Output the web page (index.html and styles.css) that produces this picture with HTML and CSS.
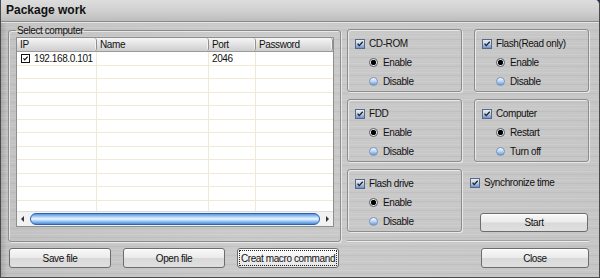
FILE: index.html
```html
<!DOCTYPE html>
<html lang="en">
<head>
    <meta charset="UTF-8">
    <meta name="viewport" content="width=device-width, initial-scale=1.0">
    <title>Package work</title>
    <link rel="stylesheet" href="styles.css">
</head>
<body>

<div class="window">
    <div class="titlebar">Package work</div>

    <div class="content">
        <div class="main">
            <!-- Computer list -->
            <fieldset class="group computers">
                <legend>Select computer</legend>
                <div class="list">
                    <div class="list-head">
                        <div class="hcol">IP</div>
                        <div class="hcol">Name</div>
                        <div class="hcol">Port</div>
                        <div class="hcol">Password</div>
                    </div>
                    <div class="list-body">
                        <div class="row">
                            <div class="cell"><span class="tick"><svg viewBox="0 0 9 9"><path d="M1.8 4.2l1.8 2L7.2 2" fill="none" stroke="#111" stroke-width="1.5"/></svg></span>192.168.0.101</div>
                            <div class="cell"></div>
                            <div class="cell">2046</div>
                            <div class="cell"></div>
                        </div>
                        <div class="row"><div class="cell"></div><div class="cell"></div><div class="cell"></div><div class="cell"></div></div>
                        <div class="row"><div class="cell"></div><div class="cell"></div><div class="cell"></div><div class="cell"></div></div>
                        <div class="row"><div class="cell"></div><div class="cell"></div><div class="cell"></div><div class="cell"></div></div>
                        <div class="row"><div class="cell"></div><div class="cell"></div><div class="cell"></div><div class="cell"></div></div>
                        <div class="row"><div class="cell"></div><div class="cell"></div><div class="cell"></div><div class="cell"></div></div>
                        <div class="row"><div class="cell"></div><div class="cell"></div><div class="cell"></div><div class="cell"></div></div>
                        <div class="row"><div class="cell"></div><div class="cell"></div><div class="cell"></div><div class="cell"></div></div>
                        <div class="row"><div class="cell"></div><div class="cell"></div><div class="cell"></div><div class="cell"></div></div>
                        <div class="row"><div class="cell"></div><div class="cell"></div><div class="cell"></div><div class="cell"></div></div>
                        <div class="row"><div class="cell"></div><div class="cell"></div><div class="cell"></div><div class="cell"></div></div>
                        <div class="row"><div class="cell"></div><div class="cell"></div><div class="cell"></div><div class="cell"></div></div>
                    </div>
                    <div class="hscroll">
                        <span class="arrow arrow-left"></span>
                        <div class="thumb"></div>
                        <span class="arrow arrow-right"></span>
                    </div>
                </div>
            </fieldset>

            <!-- Device options -->
            <div class="options">
                <div class="opt-grid">
                    <div class="group box">
                        <div class="check"><span class="cb"><svg viewBox="0 0 10 10"><path d="M2 4.6l2 2.4L8.4 2.2" fill="none" stroke="#1d1d1d" stroke-width="1.6"/></svg></span>CD-ROM</div>
                        <div class="radio"><span class="rb on"></span>Enable</div>
                        <div class="radio"><span class="rb"></span>Disable</div>
                    </div>
                    <div class="group box">
                        <div class="check"><span class="cb"><svg viewBox="0 0 10 10"><path d="M2 4.6l2 2.4L8.4 2.2" fill="none" stroke="#1d1d1d" stroke-width="1.6"/></svg></span>Flash(Read only)</div>
                        <div class="radio"><span class="rb on"></span>Enable</div>
                        <div class="radio"><span class="rb"></span>Disable</div>
                    </div>
                    <div class="group box">
                        <div class="check"><span class="cb"><svg viewBox="0 0 10 10"><path d="M2 4.6l2 2.4L8.4 2.2" fill="none" stroke="#1d1d1d" stroke-width="1.6"/></svg></span>FDD</div>
                        <div class="radio"><span class="rb on"></span>Enable</div>
                        <div class="radio"><span class="rb"></span>Disable</div>
                    </div>
                    <div class="group box">
                        <div class="check"><span class="cb"><svg viewBox="0 0 10 10"><path d="M2 4.6l2 2.4L8.4 2.2" fill="none" stroke="#1d1d1d" stroke-width="1.6"/></svg></span>Computer</div>
                        <div class="radio"><span class="rb on"></span>Restart</div>
                        <div class="radio"><span class="rb"></span>Turn off</div>
                    </div>
                    <div class="group box">
                        <div class="check"><span class="cb"><svg viewBox="0 0 10 10"><path d="M2 4.6l2 2.4L8.4 2.2" fill="none" stroke="#1d1d1d" stroke-width="1.6"/></svg></span>Flash drive</div>
                        <div class="radio"><span class="rb on"></span>Enable</div>
                        <div class="radio"><span class="rb"></span>Disable</div>
                    </div>
                    <div class="sync-cell">
                        <div class="check sync"><span class="cb"><svg viewBox="0 0 10 10"><path d="M2 4.6l2 2.4L8.4 2.2" fill="none" stroke="#1d1d1d" stroke-width="1.6"/></svg></span>Synchronize time</div>
                        <button class="btn btn-start">Start</button>
                    </div>
                </div>
                <div class="sep"></div>
            </div>
        </div>

        <div class="actions">
            <div class="actions-left">
                <button class="btn">Save file</button>
                <button class="btn">Open file</button>
                <button class="btn focused">Creat macro command</button>
            </div>
            <div class="actions-right">
                <button class="btn btn-close">Close</button>
            </div>
        </div>
    </div>
</div>

</body>
</html>
```

FILE: styles.css
```css
/* Page */
body {
    margin: 0;
    background-color: #22354f;
    font-family: "Liberation Sans Narrow", "Liberation Sans", Arial, sans-serif;
    font-size: 10px;
    letter-spacing: -0.4px;
    color: #111;
}

/* Window with brushed metal look */
.window {
    width: 598px;
    height: 277px;
    border: 1px solid #4a4a4a;
    border-top: none;
    border-top-right-radius: 5px;
    overflow: hidden;
    display: flex;
    flex-direction: column;
    background-color: #c8c8c8;
    background-image:
        repeating-linear-gradient(180deg, rgba(255, 255, 255, 0.10) 0 1px, transparent 1px 3px, rgba(0, 0, 0, 0.04) 3px 4px, transparent 4px 6px, rgba(255, 255, 255, 0.06) 6px 7px, transparent 7px 9px),
        linear-gradient(90deg, #a9a9a9 0, #c2c2c2 6px, #cacaca 40%, #c6c6c6 100%);
}

.titlebar {
    height: 21px;
    line-height: 21px;
    padding-left: 5px;
    font-family: "Liberation Sans", Arial, sans-serif;
    font-weight: bold;
    font-size: 12px;
    letter-spacing: 0;
    color: #111;
    background: linear-gradient(#dddddd, #cfcfcf 55%, #bdbdbd);
    border-bottom: 1px solid #8a8a8a;
    box-shadow: 0 1px 0 #e4e4e4;
}

.content {
    padding: 2px 10px 0 7px;
}

.main {
    display: flex;
    gap: 6px;
}

/* Etched group frames */
.group {
    border: 1px solid #8c8c8c;
    border-radius: 3px;
    box-shadow: inset 1px 1px 0 #e8e8e8, 1px 1px 0 #e8e8e8;
}

.computers {
    margin: 0;
    width: 318px;
    padding: 0 6px 13px 7px;
}

.computers legend {
    padding: 0 1px;
    line-height: 13px;
    font-size: 10px;
}

/* List view */
.list {
    height: 188px;
    border: 1px solid #8e8e8e;
    background-color: #fff;
    display: flex;
    flex-direction: column;
}

.list-head,
.row {
    display: grid;
    grid-template-columns: 80px 112px 47px 77px;
}

.list-head {
    height: 13px;
    line-height: 13px;
    background: linear-gradient(#f6f6f6, #e2e2e2 50%, #cdcdcd);
    border-bottom: 1px solid #9a9a9a;
}

.hcol {
    padding-left: 3px;
    border-right: 1px solid #8f8f8f;
    border-radius: 0 3px 3px 0;
    box-shadow: inset -1px 0 0 #f4f4f4;
}

.list-body {
    flex: 1;
    overflow: hidden;
}

.row {
    height: 13.5px;
}

.cell {
    border-right: 1px solid #efe9d6;
    border-bottom: 1px solid #efe9d6;
    display: flex;
    align-items: center;
    padding-left: 3px;
    white-space: nowrap;
}

.cell:first-child {
    padding-left: 4px;
}

.cell:last-child {
    border-right: none;
}

.tick {
    width: 7px;
    height: 7px;
    border: 1px solid #111;
    background-color: #fff;
    margin-right: 4px;
    display: inline-flex;
}

.tick svg {
    width: 7px;
    height: 7px;
}

/* Horizontal scroll bar */
.hscroll {
    height: 14px;
    display: flex;
    align-items: center;
    gap: 2px;
    background-color: #f2f2f2;
    border-top: 1px solid #dcdcdc;
}

.arrow {
    width: 11px;
    height: 12px;
    display: flex;
    align-items: center;
    justify-content: center;
}

.arrow::before {
    content: "";
    border-top: 3px solid transparent;
    border-bottom: 3px solid transparent;
}

.arrow-left::before {
    border-right: 3px solid #333;
}

.arrow-right::before {
    border-left: 3px solid #333;
}

.thumb {
    flex: 1;
    height: 10px;
    border: 1px solid #2d62b0;
    border-radius: 6px;
    background: linear-gradient(#5d95da, #bfe0ff 35%, #eef7ff 50%, #a3cdf5 70%, #4f8ad6);
}

/* Right side options */
.options {
    width: 242px;
    padding-top: 5px;
}

.opt-grid {
    display: grid;
    grid-template-columns: 115px 115px;
    grid-template-rows: 63px 63px 63px;
    column-gap: 12px;
    row-gap: 7px;
}

.box {
    box-sizing: border-box;
    padding: 4px 0 0 7px;
}

.check,
.radio {
    height: 19px;
    display: flex;
    align-items: center;
    white-space: nowrap;
}

.radio {
    padding-left: 14px;
}

.cb {
    width: 8px;
    height: 8px;
    margin-right: 4px;
    border: 1px solid #56678a;
    background: linear-gradient(#e8edf3, #c6d3e4 45%, #6c93cc);
    display: inline-flex;
}

.cb svg {
    width: 8px;
    height: 8px;
}

.rb {
    width: 7px;
    height: 7px;
    margin-right: 5px;
    border: 1px solid #7f93b4;
    border-radius: 50%;
    background: linear-gradient(#f8fbff, #b8d4f4 50%, #5f98e0);
}

.rb.on {
    border-color: #5a5a5a;
    background: radial-gradient(circle, #000 0 2px, #2a2a2a 2.5px, #e8eef6 3px);
}

.sync-cell {
    display: flex;
    flex-direction: column;
    justify-content: space-between;
}

.sync {
    margin-top: 4px;
    margin-left: -4px;
}

.sep {
    margin-top: 8px;
    height: 0;
    border-top: 1px solid #a2a2a2;
    border-bottom: 1px solid #ececec;
}

/* Buttons */
.btn {
    height: 20px;
    padding: 0;
    font-family: inherit;
    font-size: 10px;
    letter-spacing: -0.4px;
    white-space: nowrap;
    color: #111;
    border: 1px solid #6c6c6c;
    border-radius: 3px;
    background: linear-gradient(#f8f8f8, #ebebeb 48%, #d9d9d9 52%, #e0e0e0);
    box-shadow: inset 0 1px 0 #ffffff;
}

.btn-start {
    width: 108px;
    height: 19px;
    margin-left: 6px;
}

.focused {
    outline: 1px dotted #222;
    outline-offset: -3px;
    background: linear-gradient(#fdfdfd, #f1f1f1 50%, #e6e6e6);
}

.actions {
    margin-top: 6px;
    display: flex;
    gap: 6px;
}

.actions-left {
    width: 332px;
    padding-left: 1px;
    display: flex;
    gap: 12px;
}

.actions-left .btn {
    width: 102px;
}

.actions-right {
    width: 242px;
    display: flex;
    justify-content: flex-end;
}

.btn-close {
    width: 108px;
}
```
